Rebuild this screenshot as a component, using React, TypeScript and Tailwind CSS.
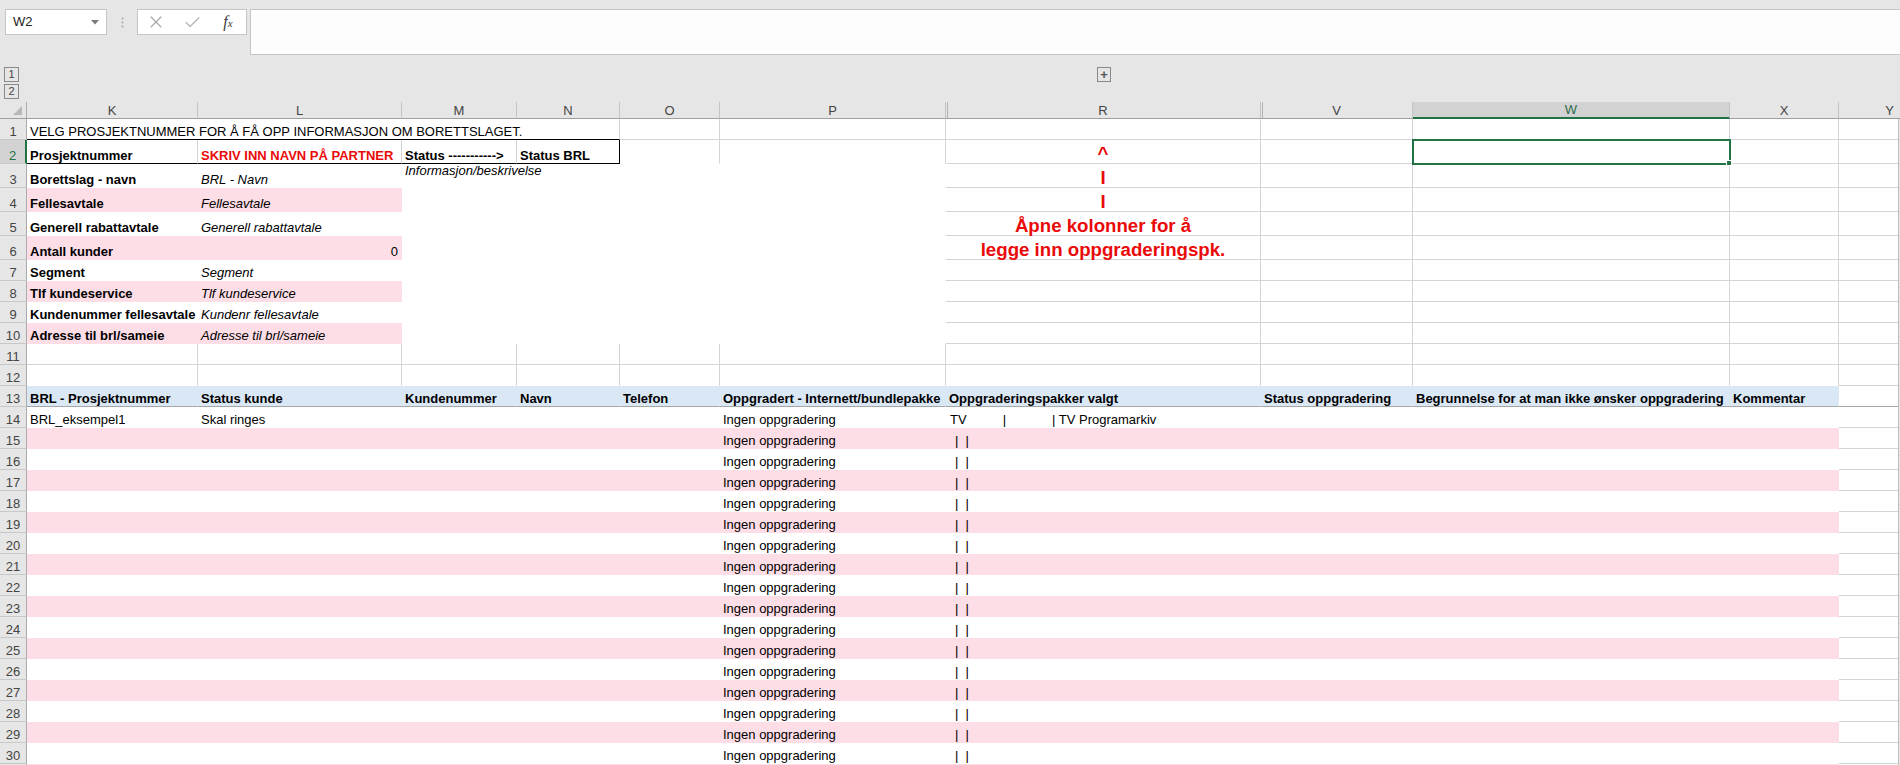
import React from "react";
import { X, Check } from "lucide-react";

const COLS =
  "grid grid-cols-[27px_171px_204px_115px_103px_100px_226px_315px_152px_317px_109px_102px]";

type Fill = "g" | "w" | "p" | "b";
const FILL: Record<Fill, string> = {
  g: "bg-white border-[#d4d4d4]",
  w: "bg-white border-white",
  p: "bg-[#fddde6] border-[#fddde6]",
  b: "bg-[#dae7f5] border-[#dae7f5]",
};

const RED = "justify-center font-bold text-[18.67px] leading-[19px] text-[#ea0a0a]";

function C({ f = "g", className = "", children }: { f?: Fill; className?: string; children?: React.ReactNode }) {
  return (
    <div className={`flex items-end min-w-0 border-r border-b px-[3px] whitespace-nowrap leading-[14px] ${FILL[f]} ${className}`}>
      {children}
    </div>
  );
}

function RH({ n, sel }: { n?: number; sel?: boolean }) {
  if (sel) {
    return (
      <div className="flex items-end justify-center border-b border-b-[#c8c8c8] border-r-2 border-r-[#217346] bg-[#d2d2d2] text-[#217346] leading-[14px]">
        {n}
      </div>
    );
  }
  return (
    <div className="flex items-end justify-center border-r border-b border-r-[#ababab] border-b-[#c8c8c8] bg-[#e6e6e6] text-[#444] leading-[14px]">
      {n}
    </div>
  );
}

const infoRows: { n: number; f: Fill; k: string; l: string; red?: string; right?: boolean; m?: string }[] = [
  { n: 3, f: "w", k: "Borettslag - navn", l: "BRL - Navn", red: "I", m: "Informasjon/beskrivelse" },
  { n: 4, f: "p", k: "Fellesavtale", l: "Fellesavtale", red: "I" },
  { n: 5, f: "w", k: "Generell rabattavtale", l: "Generell rabattavtale", red: "Åpne kolonner for å" },
  { n: 6, f: "p", k: "Antall kunder", l: "0", right: true, red: "legge inn oppgraderingspk." },
  { n: 7, f: "w", k: "Segment", l: "Segment" },
  { n: 8, f: "p", k: "Tlf kundeservice", l: "Tlf kundeservice" },
  { n: 9, f: "w", k: "Kundenummer fellesavtale", l: "Kundenr fellesavtale" },
  { n: 10, f: "p", k: "Adresse til brl/sameie", l: "Adresse til brl/sameie" },
];

const headers = [
  "BRL - Prosjektnummer",
  "Status kunde",
  "Kundenummer",
  "Navn",
  "Telefon",
  "Oppgradert - Internett/bundlepakke",
  "Oppgraderingspakker valgt",
  "Status oppgradering",
  "Begrunnelse for at man ikke ønsker oppgradering",
  "Kommentar",
];

const letters = ["K", "L", "M", "N", "O", "P", "R", "V", "W", "X", "Y"];

function FormulaBar() {
  return (
    <div className="flex items-start pt-[9px] h-[58px]">
      <div className="ml-[5px] w-[102px] h-[26px] bg-white border border-[#c6c6c6] flex items-center justify-between pl-[7px] pr-[7px] text-[#222]">
        <span>W2</span>
        <svg width="8" height="5" viewBox="0 0 8 5">
          <polygon points="0,0 8,0 4,4.5" fill="#7a7a7a" />
        </svg>
      </div>
      <div className="w-[30px] flex justify-center pt-[8px]">
        <svg width="3" height="11" viewBox="0 0 3 11">
          <circle cx="1.5" cy="1.5" r="1" fill="#a8a8a8" />
          <circle cx="1.5" cy="5.5" r="1" fill="#a8a8a8" />
          <circle cx="1.5" cy="9.5" r="1" fill="#a8a8a8" />
        </svg>
      </div>
      <div className="w-[110px] h-[26px] bg-white border border-[#c6c6c6] flex items-center">
        <div className="w-[36px] flex justify-center">
          <X size={20} strokeWidth={1.4} color="#a6a6a6" />
        </div>
        <div className="w-[36px] flex justify-center">
          <Check size={19} strokeWidth={1.6} color="#b4b4b4" />
        </div>
        <div className="w-[36px] flex justify-center items-baseline text-[#3c3c3c] font-['Liberation_Serif',serif] italic">
          <span className="text-[16px]">f</span>
          <span className="text-[11px]">x</span>
        </div>
      </div>
      <div className="ml-[3px] flex-1 h-[46px] bg-[#fdfdfd] border border-r-0 border-[#c6c6c6]" />
    </div>
  );
}

function OutlineBar() {
  return (
    <div className="flex items-start pt-[9px] h-[44px]">
      <div className="ml-[4px] flex flex-col gap-[2px]">
        <div className="w-[15px] h-[15px] border border-[#8a8a8a] flex items-center justify-center text-[11px] leading-none text-[#444]">1</div>
        <div className="w-[15px] h-[15px] border border-[#8a8a8a] flex items-center justify-center text-[11px] leading-none text-[#444]">2</div>
      </div>
      <div className="ml-[1078px] w-[14px] h-[15px] border border-[#8a8a8a] flex items-center justify-center text-[13px] font-bold leading-none text-[#555]">
        +
      </div>
    </div>
  );
}

function ColumnHeaders() {
  return (
    <div className={`${COLS} h-[17px] w-[1900px] overflow-hidden`}>
      <div className="relative border-r border-b border-r-[#ababab] border-b-[#9f9f9f]">
        <svg className="absolute right-[4px] bottom-[3px]" width="9" height="9" viewBox="0 0 9 9">
          <polygon points="9,0 9,9 0,9" fill="#b8b8b8" />
        </svg>
      </div>
      {letters.map((l) =>
        l === "W" ? (
          <div key={l} className="flex items-center justify-center border-r border-r-[#c4c4c4] border-b-2 border-b-[#217346] bg-[#d2d2d2] text-[#2e6b4b] leading-none">
            {l}
          </div>
        ) : l === "R" || l === "V" ? (
          <div key={l} className="flex items-center justify-center border-r border-b border-r-[#c4c4c4] border-b-[#9f9f9f] text-[#444] leading-none shadow-[inset_1px_0_0_#e6e6e6,inset_2px_0_0_#b4b4b4]">
            {l}
          </div>
        ) : (
          <div key={l} className="flex items-center justify-center border-r border-b border-r-[#c4c4c4] border-b-[#9f9f9f] text-[#444] leading-none">
            {l}
          </div>
        )
      )}
    </div>
  );
}

export default function App() {
  const lower = Array.from({ length: 18 }, (_, i) => 14 + i);

  return (
    <div className="w-[1900px] h-[765px] overflow-hidden bg-[#e6e6e6] font-['Liberation_Sans',Arial,sans-serif] text-[13px] text-black">
      <FormulaBar />
      <OutlineBar />
      <ColumnHeaders />

      <div className="w-[1899px] overflow-hidden border-r border-[#bfbfbf] bg-white">
        {/* row 1 */}
        <div className={`${COLS} h-[21px]`}>
          <RH n={1} />
          <C className="col-span-4 border-b-black">VELG PROSJEKTNUMMER FOR Å FÅ OPP INFORMASJON OM BORETTSLAGET.</C>
          <C />
          <C />
          <C />
          <C />
          <C />
          <C />
          <C />
        </div>

        {/* row 2 */}
        <div className={`${COLS} h-[24px]`}>
          <RH n={2} sel />
          <C className="font-bold border-b-black">Prosjektnummer</C>
          <C className="font-bold text-[#ea0a0a] border-b-black">SKRIV INN NAVN PÅ PARTNER</C>
          <C className="font-bold border-b-black">Status -----------&gt;</C>
          <C className="font-bold border-b-black border-r-black">Status BRL</C>
          <C className="border-b-white" />
          <C className="border-b-white" />
          <C className={RED}>^</C>
          <C />
          <C className="relative">
            <div className="absolute -left-[1px] -top-[1px] w-[319px] h-[26px] border-2 border-[#217346]" />
            <div className="absolute -right-[3px] -bottom-[3px] w-[6px] h-[6px] bg-[#217346] border border-white" />
          </C>
          <C />
          <C />
        </div>

        {/* rows 3-10 */}
        {infoRows.map((r) => (
          <div key={r.n} className={`${COLS} ${r.n <= 6 ? "h-[24px]" : "h-[21px]"}`}>
            <RH n={r.n} />
            <C f={r.f} className="font-bold">{r.k}</C>
            <C f={r.f} className={r.right ? "justify-end" : "italic"}>{r.l}</C>
            <C f="w" className="relative z-10 items-start italic">{r.m}</C>
            <C f="w" />
            <C f="w" />
            <C f="w" />
            <C className={r.red ? `relative z-10 ${RED}` : ""}>{r.red}</C>
            <C />
            <C />
            <C />
            <C />
          </div>
        ))}

        {/* row 11 */}
        <div className={`${COLS} h-[21px]`}>
          <RH n={11} />
          {letters.map((l) => (
            <C key={l} />
          ))}
        </div>

        {/* row 12 */}
        <div className={`${COLS} h-[21px]`}>
          <RH n={12} />
          {letters.map((l) => (
            <C key={l} className={l === "Y" ? "" : "border-b-white"} />
          ))}
        </div>

        {/* row 13 header */}
        <div className={`${COLS} h-[21px]`}>
          <RH n={13} />
          {headers.map((h) => (
            <C key={h} f="b" className="font-bold overflow-hidden border-b-[#a6a6a6]">
              {h}
            </C>
          ))}
          <C className="border-b-[#a6a6a6]" />
        </div>

        {/* rows 14-31 (31 only peeks in at the bottom edge) */}
        {lower.map((n) => {
          const f: Fill = n % 2 === 1 ? "p" : "w";
          const last = n === 31;
          return (
            <div key={n} className={`${COLS} h-[21px]`}>
              <RH n={last ? undefined : n} />
              <C f={f}>{n === 14 ? "BRL_eksempel1" : null}</C>
              <C f={f}>{n === 14 ? "Skal ringes" : null}</C>
              <C f={f} />
              <C f={f} />
              <C f={f} />
              <C f={f}>{last ? null : "Ingen oppgradering"}</C>
              <C f={f}>
                {n === 14 ? (
                  <>
                    <span className="ml-[1px]">TV</span>
                    <span className="ml-[36px]">|</span>
                    <span className="ml-[46px]">| TV Programarkiv</span>
                  </>
                ) : last ? null : (
                  <>
                    <span className="ml-[6px]">|</span>
                    <span className="ml-[7px]">|</span>
                  </>
                )}
              </C>
              <C f={f} />
              <C f={f} />
              <C f={f} />
              <C />
            </div>
          );
        })}
      </div>
    </div>
  );
}
